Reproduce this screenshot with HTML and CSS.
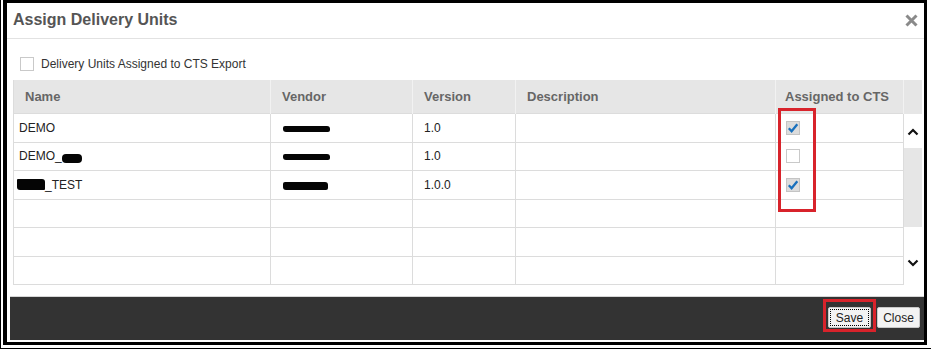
FILE: index.html
```html
<!DOCTYPE html>
<html lang="en">
  <head>
    <meta charset="UTF-8" />
    <title>Assign Delivery Units</title>
    <link rel="stylesheet" href="styles.css">
  </head>
  <body>
    <div class="screen">
      <div class="window">
        <!-- Title bar -->
        <div class="dialog-header">
          <h2>Assign Delivery Units</h2>
          <button class="close-x" aria-label="Close">
            <svg width="13" height="13" viewBox="0 0 13 13">
              <path d="M1.5 1.5 L11.5 11.5 M11.5 1.5 L1.5 11.5" stroke="#8a8a8a" stroke-width="3" fill="none" />
            </svg>
          </button>
        </div>

        <div class="dialog-body">
          <label class="filter-row">
            <span class="box"></span>
            <span>Delivery Units Assigned to CTS Export</span>
          </label>

          <div class="grid-wrap">
            <table class="du-table">
              <colgroup>
                <col class="c-name" />
                <col class="c-vendor" />
                <col class="c-version" />
                <col class="c-desc" />
                <col class="c-assigned" />
                <col class="c-scroll" />
              </colgroup>
              <thead>
                <tr>
                  <th>Name</th>
                  <th>Vendor</th>
                  <th>Version</th>
                  <th>Description</th>
                  <th class="assigned-head">Assigned to CTS</th>
                  <th class="scroll-head"></th>
                </tr>
              </thead>
              <tbody>
                <tr>
                  <td class="name">DEMO</td>
                  <td class="vendor"><span class="redact r-vendor"></span></td>
                  <td class="version">1.0</td>
                  <td></td>
                  <td class="assigned"><span class="box checked"><svg width="12" height="12" viewBox="0 0 12 12"><path d="M1.8 6.3 L4.6 9.3 L10.3 2.2" stroke="#1870bd" stroke-width="2.3" fill="none" /></svg></span></td>
                  <td class="scroll-cell" rowspan="6">
                    <div class="scrollbar">
                      <div class="arrow-zone">
                        <svg width="12" height="8" viewBox="0 0 12 8"><path d="M1.5 6.5 L6 2 L10.5 6.5" stroke="#111" stroke-width="2.2" fill="none" /></svg>
                      </div>
                      <div class="thumb"></div>
                      <div class="arrow-zone bottom">
                        <svg width="12" height="8" viewBox="0 0 12 8"><path d="M1.5 1.5 L6 6 L10.5 1.5" stroke="#111" stroke-width="2.2" fill="none" /></svg>
                      </div>
                    </div>
                  </td>
                </tr>
                <tr>
                  <td class="name">DEMO_<span class="redact r-short"></span></td>
                  <td class="vendor"><span class="redact r-vendor"></span></td>
                  <td class="version">1.0</td>
                  <td></td>
                  <td class="assigned"><span class="box"></span></td>
                </tr>
                <tr>
                  <td class="name name-lead"><span class="redact r-lead"></span>_TEST</td>
                  <td class="vendor"><span class="redact r-vendor r-thick"></span></td>
                  <td class="version">1.0.0</td>
                  <td></td>
                  <td class="assigned"><span class="box checked"><svg width="12" height="12" viewBox="0 0 12 12"><path d="M1.8 6.3 L4.6 9.3 L10.3 2.2" stroke="#1870bd" stroke-width="2.3" fill="none" /></svg></span></td>
                </tr>
                <tr><td></td><td></td><td></td><td></td><td></td></tr>
                <tr><td></td><td></td><td></td><td></td><td></td></tr>
                <tr><td></td><td></td><td></td><td></td><td></td></tr>
              </tbody>
            </table>

            <!-- annotation around the assigned checkboxes -->
            <div class="mark mark-assigned"></div>
          </div>
        </div>

        <div class="dialog-footer">
          <div class="save-wrap">
            <button class="btn btn-focus">Save</button>
          </div>
          <button class="btn">Close</button>
        </div>
      </div>
    </div>
  </body>
</html>
```

FILE: styles.css
```css
body {
  margin: 0;
  background: #fff;
  font-family: "Liberation Sans", Arial, sans-serif;
  color: #222;
}

.screen {
  width: 931px;
  height: 349px;
  box-sizing: border-box;
  border-left: 1px solid #000;
  border-bottom: 1px solid #000;
  padding: 0 0 2px 2px;
}

.window {
  width: 924px;
  height: 345px;
  box-sizing: border-box;
  border: 3px solid #000;
  border-left-width: 4px;
  padding: 0 0 2px 3px;
  display: flex;
  flex-direction: column;
  background: #fff;
}

.dialog-header {
  height: 35px;
  display: flex;
  align-items: center;
  justify-content: space-between;
  border-bottom: 1px solid #e2e2e2;
  margin-left: -3px;
  padding: 0 6px 0 6px;
}

.dialog-header h2 {
  margin: 0;
  font-size: 16px;
  font-weight: bold;
  color: #555;
  padding-bottom: 2px;
}

.close-x {
  background: none;
  border: none;
  padding: 0;
  width: 13px;
  height: 13px;
  display: flex;
}

.dialog-body {
  flex: 1;
  padding: 0 3px;
}

.filter-row {
  display: flex;
  align-items: center;
  gap: 7px;
  margin: 18px 0 0 7px;
  height: 14px;
  font-size: 12px;
  color: #333;
}

.box {
  display: inline-flex;
  align-items: center;
  justify-content: center;
  width: 14px;
  height: 14px;
  box-sizing: border-box;
  border: 1px solid #c9c9c9;
  background: #fff;
  vertical-align: middle;
}

.box.checked {
  background: #dcdcdc;
  border-color: #c4c4c4;
}

.grid-wrap {
  position: relative;
  margin-top: 9px;
}

.du-table {
  width: 908px;
  border-collapse: collapse;
  table-layout: fixed;
  font-size: 12px;
}

.c-name { width: 257px; }
.c-vendor { width: 142px; }
.c-version { width: 103px; }
.c-desc { width: 260px; }
.c-assigned { width: 128px; }
.c-scroll { width: 18px; }

.du-table th {
  height: 33px;
  padding: 0 0 0 11px;
  background: #e6e6e6;
  border-left: 1px solid #f2f2f2;
  text-align: left;
  font-size: 13px;
  font-weight: bold;
  color: #666;
}

.du-table th:first-child {
  border-left: 1px solid #dcdcdc;
}

.du-table th.assigned-head {
  padding-left: 9px;
}

.du-table th.scroll-head {
  padding: 0;
}

.du-table tbody tr {
  height: 28.5px;
}

.du-table td {
  padding: 0 0 0 11px;
  border: 1px solid #dcdcdc;
  color: #222;
  white-space: nowrap;
}

.du-table td.name {
  padding-left: 5px;
}

.du-table td.name-lead {
  padding-left: 3px;
}

.du-table td.vendor {
  padding-left: 12px;
}

.du-table td.assigned {
  padding-left: 10px;
}

.du-table td.assigned .box {
  margin-top: -1px;
}

.du-table td.scroll-cell {
  padding: 0;
  border: none;
  border-left: 1px solid #dcdcdc;
  vertical-align: top;
}

.scrollbar {
  height: 171px;
  display: flex;
  flex-direction: column;
}

.arrow-zone {
  height: 34px;
  display: flex;
  align-items: center;
  justify-content: center;
  padding-top: 2px;
  box-sizing: border-box;
}

.arrow-zone.bottom {
  flex: 1;
  align-items: flex-end;
  padding: 0 0 18px;
}

.thumb {
  height: 79px;
  background: #e6e6e6;
}

.redact {
  display: inline-block;
  background: #050505;
  vertical-align: middle;
}

.r-vendor {
  width: 47px;
  height: 6px;
  border-radius: 2px 3px 2px 3px;
}

.r-thick {
  height: 8px;
  width: 45px;
}

.r-short {
  width: 20px;
  height: 9px;
  border-radius: 4px;
  margin-top: 2px;
}

.r-lead {
  width: 28px;
  height: 11px;
  border-radius: 1px 3px 1px 3px;
  margin-top: -2px;
}

.mark {
  position: absolute;
  border: 3px solid #d8232b;
}

.mark-assigned {
  left: 765px;
  top: 28px;
  width: 32px;
  height: 98px;
}

.dialog-footer {
  height: 44px;
  box-sizing: border-box;
  background: #333;
  border-top: 1px solid #d6d6d6;
  display: flex;
  align-items: center;
  justify-content: flex-end;
  gap: 6px;
  padding: 0 4px 2px 0;
}

.save-wrap {
  position: relative;
}

.save-wrap::after {
  content: "";
  position: absolute;
  left: -5px;
  top: -8px;
  right: -5px;
  bottom: -4px;
  border: 3px solid #d8232b;
  pointer-events: none;
}

.btn {
  height: 21px;
  width: 43px;
  padding: 0;
  background: #f3f3f3;
  border: 1px solid #c8c8c8;
  border-radius: 2px;
  font-family: "Liberation Sans", Arial, sans-serif;
  font-size: 12px;
  color: #222;
}

.btn-focus {
  outline: 1px dotted #000;
  outline-offset: -3px;
}
```
